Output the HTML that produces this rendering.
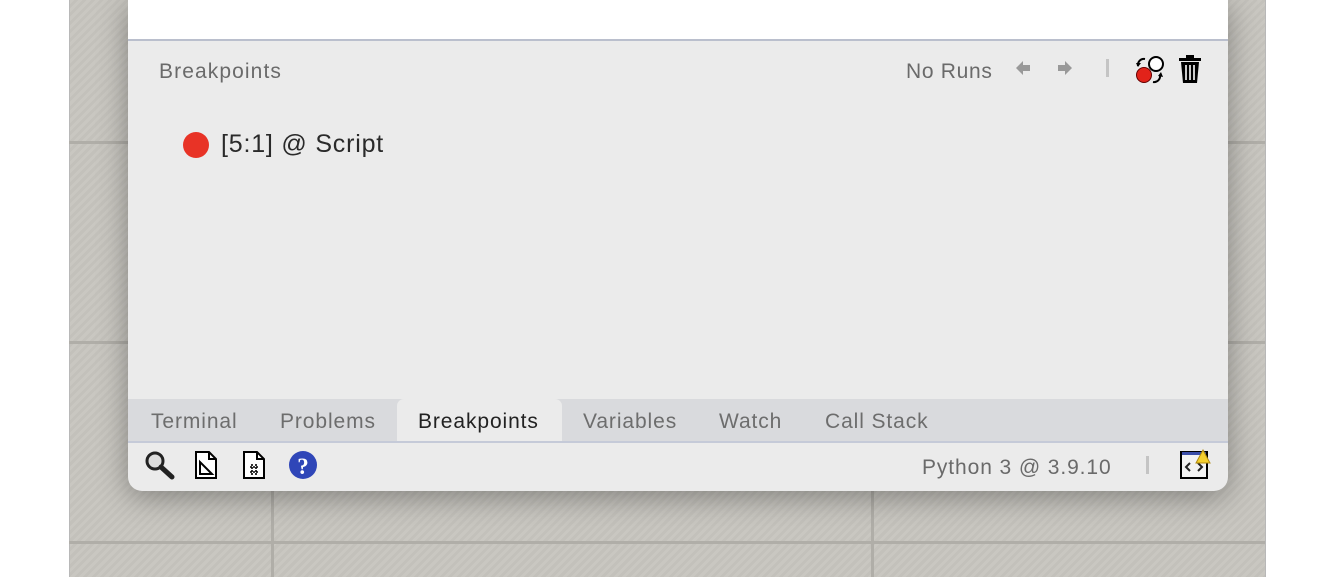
<!DOCTYPE html>
<html><head><style>
body{margin:0;width:1340px;height:577px;background:#fff;position:relative;overflow:hidden;font-family:"Liberation Sans",sans-serif}
.bg{position:absolute;left:69px;top:0;width:1195px;height:577px;background:repeating-linear-gradient(135deg,#c9c7c1 0 3px,#c3c1bb 3px 6px);border-left:1px solid #b8b8b8;border-right:1px solid #b8b8b8}
.h{position:absolute;left:69px;width:1196px;height:3px;background:#b0aea8}
.v{position:absolute;top:0;width:3px;height:577px;background:#b0aea8}
.win{position:absolute;left:128px;top:0;width:1100px;height:491px;background:#ebebeb;border-radius:0 0 14px 14px;box-shadow:0 6px 30px rgba(0,0,0,.35);overflow:hidden}
.white{position:absolute;left:0;top:0;width:1100px;height:39px;background:#fff;border-bottom:2px solid #babfcd}
.t{position:absolute;color:#6a6a6a;font-size:20px;white-space:nowrap}
.tabs{position:absolute;left:0;top:399px;width:1100px;height:42px;background:#d9dadd;border-bottom:2px solid #c5cad8}
.tab{position:absolute;top:11px;font-size:21px;color:#6d6d6d;letter-spacing:0.9px;white-space:nowrap}
.act{position:absolute;left:269px;top:0;width:165px;height:42px;background:#ebebeb;border-radius:7px 7px 0 0}
</style></head><body>
<div class="bg"></div>
<div class="h" style="top:141px"></div><div class="h" style="top:341px"></div><div class="h" style="top:541px"></div>
<div class="v" style="left:271px"></div><div class="v" style="left:871px"></div>
<div class="win">
<div class="white"></div>
<div class="t" style="left:31px;top:60px;font-size:21px;letter-spacing:1.1px">Breakpoints</div>
<div class="t" style="left:778px;top:60px;font-size:21px;letter-spacing:0.7px">No Runs</div>
<svg style="position:absolute;left:885px;top:58px" width="90" height="24"><path d="M3 10 L10 3 V7 H17 V13 H10 V17Z" fill="#999"/><path d="M59 10 L52 3 V7 H45 V13 H52 V17Z" fill="#999"/></svg>
<div style="position:absolute;left:978px;top:59px;width:3px;height:18px;background:#c4c4c4"></div>
<svg style="position:absolute;left:1005px;top:53px" width="34" height="34"><circle cx="11" cy="22" r="7.5" fill="#e2231a" stroke="#600" stroke-width="1"/><circle cx="23" cy="11" r="7" fill="#fff" stroke="#000" stroke-width="2"/><path d="M12 6 A6 6 0 0 0 5 13" fill="none" stroke="#000" stroke-width="2"/><path d="M3 10 L5 14 L8 10Z"/><path d="M20 29 A6 6 0 0 0 27 22" fill="none" stroke="#000" stroke-width="2"/><path d="M25 23 L28 19 L30 24Z"/></svg>
<svg style="position:absolute;left:1050px;top:55px" width="26" height="30"><rect x="1" y="3" width="22" height="3"/><rect x="8" y="0" width="8" height="4"/><path d="M3 7 H21 L19 28 H5Z"/><path d="M8 10 V25 M12 10 V25 M16 10 V25" stroke="#fff" stroke-width="1.6"/></svg>
<div style="position:absolute;left:55px;top:132px;width:26px;height:26px;border-radius:50%;background:#e83326"></div>
<div style="position:absolute;left:93px;top:130px;font-size:25px;color:#2a2a2a;letter-spacing:0.8px;white-space:nowrap">[5:1] @ Script</div>
<div class="tabs"><div class="act"></div>
<div class="tab" style="left:23px">Terminal</div><div class="tab" style="left:152px">Problems</div>
<div class="tab" style="left:290px;color:#222">Breakpoints</div><div class="tab" style="left:455px">Variables</div>
<div class="tab" style="left:591px">Watch</div><div class="tab" style="left:697px">Call Stack</div></div>
<svg style="position:absolute;left:16px;top:450px" width="34" height="30"><circle cx="11" cy="11" r="8" fill="#ddd" stroke="#222" stroke-width="3"/><path d="M17 17 L28 27" stroke="#222" stroke-width="5" stroke-linecap="round"/></svg>
<svg style="position:absolute;left:66px;top:450px" width="26" height="30"><path d="M2 2 H15 L22 9 V28 H2Z" fill="#fff" stroke="#000" stroke-width="2"/><path d="M15 2 V9 H22" fill="none" stroke="#000" stroke-width="2"/><path d="M6 12 V24 H18Z" fill="none" stroke="#000" stroke-width="2"/></svg>
<svg style="position:absolute;left:114px;top:450px" width="26" height="30"><path d="M2 2 H15 L22 9 V28 H2Z" fill="#fff" stroke="#000" stroke-width="2"/><path d="M15 2 V9 H22" fill="none" stroke="#000" stroke-width="2"/><path d="M8 17 H17 M8 22 H17 M10 14 V26 M14 14 V26" stroke="#000" stroke-width="1.6" stroke-dasharray="2 1"/></svg>
<svg style="position:absolute;left:160px;top:450px" width="32" height="32"><circle cx="15" cy="15" r="14" fill="#2f46b8"/><text x="15" y="24" font-size="23" font-weight="bold" fill="#fff" text-anchor="middle" font-family="Liberation Serif">?</text></svg>
<div class="t" style="left:794px;top:456px;font-size:21px;letter-spacing:0.9px">Python 3 @ 3.9.10</div>
<div style="position:absolute;left:1018px;top:456px;width:3px;height:18px;background:#c4c4c4"></div>
<svg style="position:absolute;left:1050px;top:448px" width="36" height="34"><rect x="3" y="4" width="26" height="26" fill="#f3f3f3" stroke="#000" stroke-width="2"/><rect x="4" y="4" width="24" height="3" fill="#3b4ea8"/><path d="M12 15 L8 19 L12 23 M20 15 L24 19 L20 23" fill="none" stroke="#222" stroke-width="2"/><path d="M25 2 L32 15 H18Z" fill="#f4cf2e" stroke="#b08a10"/></svg>
</div>
</body></html>
